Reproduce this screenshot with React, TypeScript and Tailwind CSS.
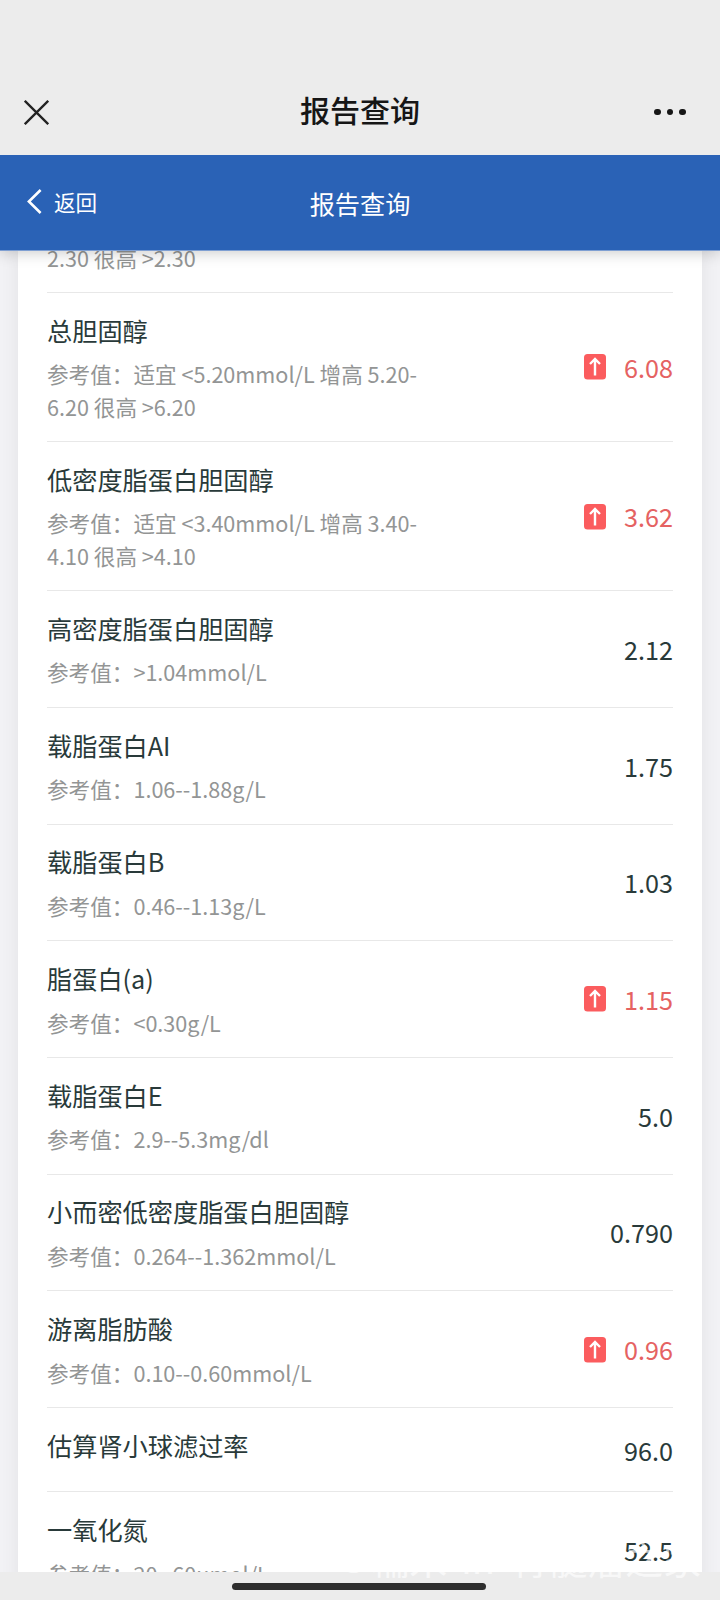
type ReportItem = {
  name: string;
  reference?: string;
  value: string;
  high?: boolean;
};

const items: ReportItem[] = [
  { name: '总胆固醇', reference: '适宜 <5.20mmol/L 增高 5.20-6.20 很高 >6.20', value: '6.08', high: true },
  { name: '低密度脂蛋白胆固醇', reference: '适宜 <3.40mmol/L 增高 3.40-4.10 很高 >4.10', value: '3.62', high: true },
  { name: '高密度脂蛋白胆固醇', reference: '>1.04mmol/L', value: '2.12' },
  { name: '载脂蛋白AI', reference: '1.06--1.88g/L', value: '1.75' },
  { name: '载脂蛋白B', reference: '0.46--1.13g/L', value: '1.03' },
  { name: '脂蛋白(a)', reference: '<0.30g/L', value: '1.15', high: true },
  { name: '载脂蛋白E', reference: '2.9--5.3mg/dl', value: '5.0' },
  { name: '小而密低密度脂蛋白胆固醇', reference: '0.264--1.362mmol/L', value: '0.790' },
  { name: '游离脂肪酸', reference: '0.10--0.60mmol/L', value: '0.96', high: true },
  { name: '估算肾小球滤过率', value: '96.0' },
  { name: '一氧化氮', reference: '20--60umol/L', value: '52.5' },
];

function HighIcon() {
  return (
    <svg className="h-[26px] w-[22px]" viewBox="0 0 22 26" fill="none">
      <rect width="22" height="25.5" rx="3.5" fill="#fb5c5e" />
      <path d="M11 21.5V5.5M6 10l5-5 5 5" stroke="#fff" strokeWidth="2.4" />
    </svg>
  );
}

function ReportRow({ item }: { item: ReportItem }) {
  return (
    <li className="flex items-center justify-between border-b border-[#e8e8e8] pt-[18.8px] pb-[18px]">
      <div className="w-[375px]">
        <h3 className="mb-[8.7px] text-[25.2px] leading-[37.8px] whitespace-nowrap text-[#293a3a]">{item.name}</h3>
        {item.reference && (
          <p className="text-[21.6px] leading-[32.4px] text-[#939595]">参考值：{item.reference}</p>
        )}
      </div>
      <div className="flex items-center gap-[18px]">
        {item.high && <HighIcon />}
        <span className={item.high ? 'pt-[1px] text-[25.2px] text-[#e56262]' : 'pt-[1px] text-[25.2px] text-[#293a3a]'}>{item.value}</span>
      </div>
    </li>
  );
}

export default function App() {
  return (
    <div className="relative flex h-[1600px] w-[720px] flex-col overflow-hidden bg-[#f2f2f5] font-['Noto_Sans_CJK_SC',sans-serif]">
      <header className="z-20 flex h-[155px] shrink-0 items-end justify-between bg-[#ececec] px-6 pb-[15px]">
        <div className="flex h-14 w-20 items-center">
          <svg className="h-[25px] w-[25px]" viewBox="0 0 25 25" stroke="#222" strokeWidth="2.3">
            <path d="M.8.8l23.4 23.4M24.2.8L.8 24.2" />
          </svg>
        </div>
        <h1 className="pb-[3px] text-[30px] leading-[56px] font-medium text-[#161616]">报告查询</h1>
        <div className="flex h-14 w-20 items-center justify-end gap-[6px] pr-[10px]">
          <i className="size-[6.6px] rounded-full bg-[#161616]" />
          <i className="size-[6.6px] rounded-full bg-[#161616]" />
          <i className="size-[6.6px] rounded-full bg-[#161616]" />
        </div>
      </header>

      <nav className="z-10 flex h-[96px] shrink-0 items-center justify-between border-b border-[#7f9fd2] bg-[#2a62b6] px-[27px] text-white shadow-[0_2px_14px_rgba(0,0,0,0.2)]">
        <button className="flex w-[120px] items-center gap-3 text-[21.6px]">
          <svg className="mb-[2px] h-[25px] w-[15px]" viewBox="0 0 15 25" fill="none" stroke="#fff" strokeWidth="2.6">
            <path d="M13.6 1L1.9 12.5l11.7 11.5" />
          </svg>
          返回
        </button>
        <h2 className="pt-[2px] text-[25.2px]">报告查询</h2>
        <div className="w-[120px]" />
      </nav>

      <main className="min-h-0 flex-1 overflow-hidden px-[18px]">
        <div className="bg-white px-[29px] shadow-[0_0_18px_rgba(0,0,0,0.07)]">
          <div className="h-[42px] overflow-hidden border-b border-[#e8e8e8]">
            <p className="-mt-[9px] text-[21.6px] leading-[32.4px] text-[#939595]">2.30 很高 &gt;2.30</p>
          </div>
          <ul>
            {items.map((item) => (
              <ReportRow key={item.name} item={item} />
            ))}
          </ul>
        </div>
      </main>

      <footer className="flex h-[28px] shrink-0 justify-center bg-[#ececec] pt-[11px] pr-[2px]">
        <div className="h-[6.5px] w-[254px] rounded-full bg-[#2e2e2e]" />
      </footer>

      {/* watermark */}
      <div className="absolute right-[19px] bottom-[18px] flex text-[38px] leading-[48px] whitespace-nowrap text-white/65">
        <span className="-mt-[5px] mr-[2px] text-[32px]">@</span>
        <span className="mr-[14px]">糯米</span>
        <span className="mr-[16px]">in</span>
        <span>骨髓瘤之家</span>
      </div>
    </div>
  );
}
